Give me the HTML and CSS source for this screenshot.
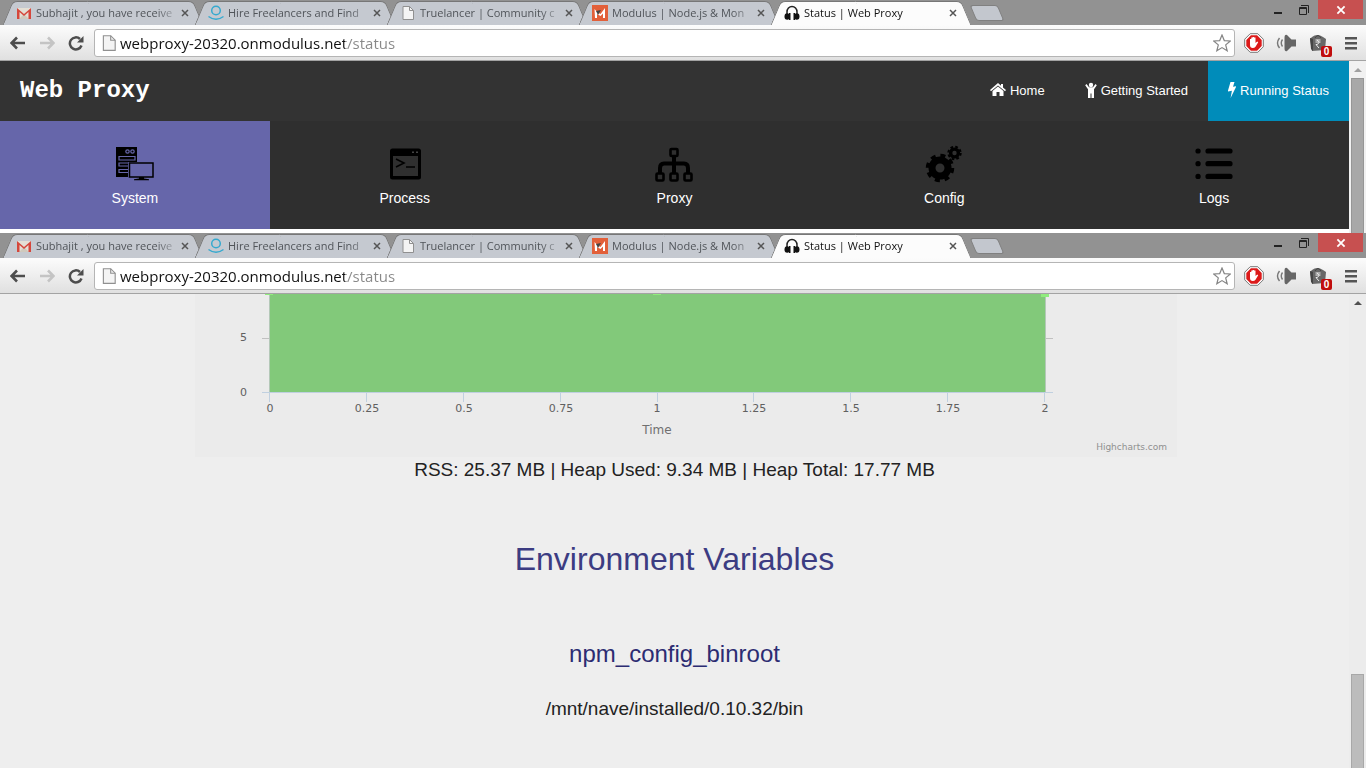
FILE: index.html
```html
<!DOCTYPE html>
<html lang="en">
<head>
<meta charset="utf-8">
<title>Status | Web Proxy</title>
<link rel="stylesheet" href="styles.css">
</head>
<body>
<svg class="sprite" aria-hidden="true">
  <symbol id="gmail" viewBox="0 0 16 16"><path d="M1 3h14v11H1z" fill="#e4dfd5"/><path d="M3 14l5-5 5 5z" fill="#cfc9bd"/><path d="M1 14V3l7 6 7-6v11h-2.500V7L8 11 3.500 7v7z" fill="#d5473c"/></symbol>
  <symbol id="lancer" viewBox="0 0 16 16"><g fill="none" stroke="#35a9cf" stroke-width="1.500"><circle cx="8" cy="5.500" r="4.300"/><path d="M.5 11.500q7.500 5.500 15 0"/></g></symbol>
  <symbol id="file" viewBox="0 0 16 16"><path d="M3 1.500h6.500l4 4v9H3z" fill="#f4f4f4" stroke="#909090"/><path d="M9.500 1.500v4h4" fill="none" stroke="#909090"/></symbol>
  <symbol id="modulus" viewBox="0 0 16 16"><path d="M0 0h16v16H0z" fill="#e2603a"/><path d="M2.500 4l3 3.500L8.500 9 13 3v10h-2V8.500L8.500 11 5 9v4H3z" fill="#fff"/><path d="M4 6l5-1-3 5z" fill="#444"/></symbol>
  <symbol id="headphones" viewBox="0 0 16 16"><path d="M3 11V7a5 5.500 0 0 1 10 0v4" fill="none" stroke="#222" stroke-width="1.500"/><ellipse cx="3.200" cy="11.500" rx="2.700" ry="3.300" fill="#111"/><ellipse cx="12.800" cy="11.500" rx="2.700" ry="3.300" fill="#111"/><path d="M5 8h1.500v7H5zM9.500 8H11v7H9.500z" fill="#111"/></symbol>
  <symbol id="cross" viewBox="0 0 10 10"><path d="M2 2l6 6M8 2L2 8" fill="none" stroke="currentColor" stroke-width="1.500"/></symbol>
  <symbol id="back" viewBox="0 0 16 16"><path d="M15 8H2M7 2.500L1.500 8 7 13.500" fill="none" stroke="currentColor" stroke-width="2.600"/></symbol>
  <symbol id="forward" viewBox="0 0 16 16"><path d="M1 8h13M9 2.500L14.500 8 9 13.500" fill="none" stroke="currentColor" stroke-width="2.600"/></symbol>
  <symbol id="reload" viewBox="0 0 16 16"><path d="M13.500 10.500A6 6 0 1 1 12 4" fill="none" stroke="currentColor" stroke-width="2.500"/><path d="M15.500 1v6.500H9z" fill="currentColor"/></symbol>
  <symbol id="star" viewBox="0 0 18 18"><path d="M9 1l2.300 5.600 6 .4-4.600 3.900 1.500 5.900L9 13.600l-5.200 3.200 1.500-5.900L.7 7l6-.4z" fill="#fff" stroke="#858585" stroke-width="1.200"/></symbol>
  <symbol id="adblock" viewBox="0 0 20 20"><path d="M6.200.7h7.600l5.500 5.500v7.600l-5.500 5.500H6.200L.7 13.800V6.200z" fill="#fff" stroke="#777"/><path d="M6.900 2.300h6.200l4.600 4.600v6.200l-4.600 4.600H6.900l-4.600-4.600V6.900z" fill="#dc1a1a"/><path d="M6 10V6h1.300v3V4.500h1.400V9 4h1.400v5-4.500h1.400V10l1.700-1.500 1 .8-2.700 4.400q-1 1.300-2.700 1.300Q6 15 6 12z" fill="#fff"/></symbol>
  <symbol id="speaker" viewBox="0 0 20 20"><path d="M8.500 5q0-4 2.500-3l4.500 4.500H20v7h-4.500L11 18q-2.500 1-2.500-3z" fill="#666"/><path d="M3.500 5Q-.5 10 3.500 15M6.500 6.500Q4 10 6.500 13.500" fill="none" stroke="#777" stroke-width="1.400"/></symbol>
  <symbol id="bag" viewBox="0 0 18 20"><path d="M3 4q5-4 11 0l3 2-1 11-13 1L1 6z" fill="#686868"/><path d="M1 5l3 1v12l-2-2z" fill="#444"/><path d="M6 5q3-5 6 0" fill="none" stroke="#444"/><path d="M6.500 7h5M6.500 9h5M8 7q4 2.500 0 4.500H7L10 15" fill="none" stroke="#eee"/></symbol>
  <symbol id="menu" viewBox="0 0 14 14"><path d="M1 1h12v2.500H1zM1 6h12v2.500H1zM1 11h12v2.500H1z" fill="#555"/></symbol>
</svg>

<section class="window">
  <div class="chrome">
    <div class="strip">
      <div class="tabs">
        <div class="tab"><svg class="i16"><use href="#gmail"/></svg><a class="title" href="#">Subhajit , you have receive</a><button class="x" aria-label="Close tab"><svg class="i10"><use href="#cross"/></svg></button></div>
        <div class="tab"><svg class="i16"><use href="#lancer"/></svg><a class="title" href="#">Hire Freelancers and Find</a><button class="x" aria-label="Close tab"><svg class="i10"><use href="#cross"/></svg></button></div>
        <div class="tab"><svg class="i16"><use href="#file"/></svg><a class="title" href="#">Truelancer | Community c</a><button class="x" aria-label="Close tab"><svg class="i10"><use href="#cross"/></svg></button></div>
        <div class="tab"><svg class="i16"><use href="#modulus"/></svg><a class="title" href="#">Modulus | Node.js &amp; Mon</a><button class="x" aria-label="Close tab"><svg class="i10"><use href="#cross"/></svg></button></div>
        <div class="tab active"><svg class="i16"><use href="#headphones"/></svg><a class="title" href="#">Status | Web Proxy</a><button class="x" aria-label="Close tab"><svg class="i10"><use href="#cross"/></svg></button></div>
        <button class="newtab" aria-label="New tab"></button>
      </div>
      <div class="controls">
        <button aria-label="Minimize"><svg class="i12" viewBox="0 0 12 12"><path d="M2 8h8v2H2z" fill="#222"/></svg></button>
        <button aria-label="Restore"><svg class="i12" viewBox="0 0 12 12"><path d="M1.500 3.500h7v7h-7zM1 4.500h8M3 1.500h7.500V9" fill="none" stroke="#222"/></svg></button>
        <button class="close" aria-label="Close"><svg class="i12"><use href="#cross"/></svg></button>
      </div>
    </div>
    <div class="toolbar">
      <div class="history">
        <button aria-label="Back"><svg class="i16"><use href="#back"/></svg></button>
        <button class="off" aria-label="Forward"><svg class="i16"><use href="#forward"/></svg></button>
        <button aria-label="Reload"><svg class="i16"><use href="#reload"/></svg></button>
      </div>
      <div class="omnibox"><svg class="page-icon"><use href="#file"/></svg><input type="text" aria-label="Address" value="webproxy-20320.onmodulus.net/status"><button aria-label="Bookmark"><svg class="i18"><use href="#star"/></svg></button></div>
      <div class="extensions">
        <button aria-label="AdBlock"><svg class="i20"><use href="#adblock"/></svg></button>
        <button aria-label="Sound"><svg class="i20"><use href="#speaker"/></svg></button>
        <button class="shop" aria-label="Deals"><svg class="i20"><use href="#bag"/></svg><span class="badge">0</span></button>
        <button class="menu" aria-label="Menu"><svg class="i14"><use href="#menu"/></svg></button>
      </div>
    </div>
  </div>
  <div class="viewport">
    <div class="page top-page">
      <header class="site">
        <a class="brand" href="#">Web Proxy</a>
        <nav class="mainnav">
          <a href="#"><svg width="16" height="16" viewBox="0 0 16 16" fill="#fff"><path d="M8 1l3 2.700V2h2v3.500L16 8l-1 1.200L8 3.400 1 9.200 0 8z"/><path d="M8 4.500l5.500 4.600V14H9.500v-4h-3v4h-4V9.100z"/></svg>Home</a>
          <a href="#"><svg width="12" height="16" viewBox="0 0 12 16" fill="#fff"><circle cx="6" cy="3" r="2.200"/><path d="M1.500 2l2.500 3.300h4L10.500 2l1.300 1.200L9 7.200V16H6.500v-4.500h-1V16H3V7.200L.2 3.200z"/></svg>Getting Started</a>
          <a class="current" href="#"><svg width="8" height="16" viewBox="0 0 8 16" fill="#fff"><path d="M2.500 0h4L5 4.800l3.500-.7L2.600 16l1.300-7.300L-.3 9.500z"/></svg>Running Status</a>
        </nav>
      </header>
      <nav class="subnav">
        <a class="current" href="#"><svg class="i38" viewBox="0 0 38 38"><path d="M0 2h21v15h-9v15H0z"/><g fill="none" stroke="#6666aa" stroke-width="1.200"><circle cx="11.500" cy="6.500" r="1.700"/><circle cx="16.500" cy="6.500" r="1.700"/><path d="M3 11.500h16v3.500H3zM12 18H3v3h9M12 24.500H3v3h9"/></g><path d="M13.500 18h23.500v14H13.500z" fill="#6666aa" stroke="#000" stroke-width="1.500"/><path d="M23 32h5v1.500l5 .8v1H18v-1l5-.8z"/></svg><span>System</span></a>
        <a href="#"><svg class="i38" viewBox="0 0 38 38"><rect x="4" y="3.500" width="31" height="31" rx="2.500"/><path d="M7 11h25v20H7z" fill="#2f2f2f"/><path d="M10 14l8 4-8 4M20 22h9" fill="none" stroke="#000" stroke-width="1.600"/><path d="M26 6.500h2v1.500h-2zM30 6.500h2v1.500h-2z" fill="#444"/></svg><span>Process</span></a>
        <a href="#"><svg class="i38" viewBox="0 0 38 38" fill="none" stroke="#000"><path d="M19 11v17M5 28v-5q0-4.500 4-4.500h20q4 0 4 4.500v5" stroke-width="4"/><g fill="#2f2f2f" stroke-width="2.600"><rect x="15.500" y="4" width="7" height="7" rx="1"/><rect x="1.500" y="28.500" width="7" height="7" rx="1"/><rect x="15.500" y="28.500" width="7" height="7" rx="1"/><rect x="29.500" y="28.500" width="7" height="7" rx="1"/></g></svg><span>Proxy</span></a>
        <a href="#"><svg class="i38" viewBox="0 0 38 38" fill="none" stroke="#000"><circle cx="15" cy="23" r="8" stroke-width="7"/><circle cx="15" cy="23" r="12.500" stroke-width="3.500" stroke-dasharray="5 4.820"/><circle cx="29.500" cy="8" r="3.900" stroke-width="3.400"/><circle cx="29.500" cy="8" r="6.200" stroke-width="2" stroke-dasharray="2.700 2.170"/></svg><span>Config</span></a>
        <a href="#"><svg class="i38" viewBox="0 0 38 38" stroke="#000" stroke-width="5.200" stroke-linecap="round"><path d="M13 6h22M13 18.700h22M13 31.400h22M3 6h.1M3 18.700h.1M3 31.400h.1"/></svg><span>Logs</span></a>
      </nav>
    </div>
    <div class="scrollbar dim"><i class="arrow"></i><i class="thumb"></i></div>
  </div>
</section>

<section class="window grow">
  <div class="chrome">
    <div class="strip">
      <div class="tabs">
        <div class="tab"><svg class="i16"><use href="#gmail"/></svg><a class="title" href="#">Subhajit , you have receive</a><button class="x" aria-label="Close tab"><svg class="i10"><use href="#cross"/></svg></button></div>
        <div class="tab"><svg class="i16"><use href="#lancer"/></svg><a class="title" href="#">Hire Freelancers and Find</a><button class="x" aria-label="Close tab"><svg class="i10"><use href="#cross"/></svg></button></div>
        <div class="tab"><svg class="i16"><use href="#file"/></svg><a class="title" href="#">Truelancer | Community c</a><button class="x" aria-label="Close tab"><svg class="i10"><use href="#cross"/></svg></button></div>
        <div class="tab"><svg class="i16"><use href="#modulus"/></svg><a class="title" href="#">Modulus | Node.js &amp; Mon</a><button class="x" aria-label="Close tab"><svg class="i10"><use href="#cross"/></svg></button></div>
        <div class="tab active"><svg class="i16"><use href="#headphones"/></svg><a class="title" href="#">Status | Web Proxy</a><button class="x" aria-label="Close tab"><svg class="i10"><use href="#cross"/></svg></button></div>
        <button class="newtab" aria-label="New tab"></button>
      </div>
      <div class="controls">
        <button aria-label="Minimize"><svg class="i12" viewBox="0 0 12 12"><path d="M2 8h8v2H2z" fill="#222"/></svg></button>
        <button aria-label="Restore"><svg class="i12" viewBox="0 0 12 12"><path d="M1.500 3.500h7v7h-7zM1 4.500h8M3 1.500h7.500V9" fill="none" stroke="#222"/></svg></button>
        <button class="close" aria-label="Close"><svg class="i12"><use href="#cross"/></svg></button>
      </div>
    </div>
    <div class="toolbar">
      <div class="history">
        <button aria-label="Back"><svg class="i16"><use href="#back"/></svg></button>
        <button class="off" aria-label="Forward"><svg class="i16"><use href="#forward"/></svg></button>
        <button aria-label="Reload"><svg class="i16"><use href="#reload"/></svg></button>
      </div>
      <div class="omnibox"><svg class="page-icon"><use href="#file"/></svg><input type="text" aria-label="Address" value="webproxy-20320.onmodulus.net/status"><button aria-label="Bookmark"><svg class="i18"><use href="#star"/></svg></button></div>
      <div class="extensions">
        <button aria-label="AdBlock"><svg class="i20"><use href="#adblock"/></svg></button>
        <button aria-label="Sound"><svg class="i20"><use href="#speaker"/></svg></button>
        <button class="shop" aria-label="Deals"><svg class="i20"><use href="#bag"/></svg><span class="badge">0</span></button>
        <button class="menu" aria-label="Menu"><svg class="i14"><use href="#menu"/></svg></button>
      </div>
    </div>
  </div>
  <div class="viewport">
    <main class="page status">
      <figure class="chart">
        <svg viewBox="0 0 982 163" role="img" aria-label="Memory over time">
          <rect width="982" height="163" fill="#ebebeb"/>
          <path d="M75 0h775v98H75z" fill="#82c97a"/>
          <path d="M67 44.500h8M850 44.500h8" stroke="#c0c0c0"/>
          <path d="M74.500 0v98M850.500 0v98" stroke="#b4c8b8"/>
          <path d="M67 98.500h791M74.500 99v9M171.500 99v9M268.500 99v9M365.500 99v9M462.500 99v9M558.500 99v9M655.500 99v9M752.500 99v9M849.500 99v9" stroke="#c0d0e0"/>
          <path d="M70 0h8v1h-8zM458 0h8v1h-8zM846 0h8v3h-8z" fill="#90ed7d"/>
          <g class="ticks">
            <text x="52" y="47" text-anchor="end">5</text><text x="52" y="102" text-anchor="end">0</text>
            <g text-anchor="middle"><text x="75" y="118">0</text><text x="172" y="118">0.25</text><text x="269" y="118">0.5</text><text x="366" y="118">0.75</text><text x="462" y="118">1</text><text x="559" y="118">1.25</text><text x="656" y="118">1.5</text><text x="753" y="118">1.75</text><text x="850" y="118">2</text></g>
          </g>
          <text class="axis" x="462" y="140" text-anchor="middle">Time</text>
          <text class="credit" x="972" y="156" text-anchor="end">Highcharts.com</text>
        </svg>
      </figure>
      <p class="reading">RSS: 25.37 MB | Heap Used: 9.34 MB | Heap Total: 17.77 MB</p>
      <h1>Environment Variables</h1>
      <h2>npm_config_binroot</h2>
      <p class="reading">/mnt/nave/installed/0.10.32/bin</p>
    </main>
    <div class="scrollbar low"><i class="arrow"></i><i class="thumb"></i></div>
  </div>
</section>
</body>
</html>
```

FILE: styles.css
```css
* { box-sizing: border-box; }
body { margin: 0; min-height: 100vh; display: flex; flex-direction: column; font-family: "Liberation Sans", Arial, sans-serif; background: #fff; }
button { border: 0; padding: 0; background: none; color: inherit; display: flex; align-items: center; justify-content: center; }
a { color: inherit; text-decoration: none; }
svg { display: block; flex: none; }
.sprite { position: absolute; width: 0; height: 0; }
.i10 { width: 10px; height: 10px; }
.i12 { width: 12px; height: 12px; }
.i14 { width: 14px; height: 14px; }
.i16 { width: 16px; height: 16px; }
.i18 { width: 18px; height: 18px; }
.i20 { width: 20px; height: 20px; }
.i38 { width: 38px; height: 38px; }

.window { display: flex; flex-direction: column; }
.grow { flex: 1; }

/* Browser frame */
.strip { height: 25px; display: flex; justify-content: space-between; align-items: flex-start; background: #929292; overflow: hidden; }
.tabs { display: flex; align-items: flex-start; padding: 1px 0 0 2px; }
.tab { position: relative; z-index: 0; display: flex; align-items: center; width: 202px; height: 24px; margin-right: -10px; padding: 0 13px 0 14px; color: #505459; font: 11px "Open Sans", "Noto Sans", sans-serif; }
.tab::before, .tab::after { content: ""; position: absolute; z-index: -1; top: 0; height: 25px; background: #c5c9d0; border: 1px solid #777; }
.tab::before { left: 5px; right: 50%; border-right: 0; border-radius: 5px 0 0 0; transform: skewX(-23deg); }
.tab::after { left: 45%; right: 5px; border-left: 0; border-radius: 0 5px 0 0; transform: skewX(23deg); }
.tab.active { z-index: 1; color: #111; }
.tab.active::before, .tab.active::after { background: #fcfcfc; border-bottom-color: #fcfcfc; }
.title { width: 142px; margin: 0 2px 0 4px; white-space: nowrap; line-height: 18px; mask-image: linear-gradient(90deg, #000 120px, transparent 145px); }
.x { width: 10px; height: 16px; color: #555; }
.newtab { width: 28px; height: 16px; margin: 4px 0 0 11px; background: #c3c7ce; border: 1px solid #808080; border-radius: 3px; transform: skewX(23deg); }
.controls { display: flex; padding-right: 3px; }
.controls button { width: 26px; height: 19px; }
.controls .close { width: 45px; margin-left: 1px; background: #c75050; color: #fff; }

.toolbar { height: 36px; display: flex; align-items: center; padding: 0 8px 0 10px; background: linear-gradient(#fcfcfc, #e0e0e0); border-bottom: 1px solid #a3a3a3; }
.history { display: flex; gap: 13px; width: 84px; color: #4d4d4d; }
.history .off { color: #c4c4c4; }
.omnibox { flex: 1; height: 28px; display: flex; align-items: center; padding: 0 3px 0 5px; background: #fff; border: 1px solid #b5b5b5; border-radius: 3px; }
.page-icon { width: 18px; height: 18px; }
.omnibox input { flex: 1; min-width: 0; height: 24px; margin: 0 0 0 2px; padding: 0; border: 0; outline: 0; font: 15px "Open Sans", "Noto Sans", sans-serif; color: transparent; background: linear-gradient(90deg, #111 225px, #888 225px); -webkit-background-clip: text; background-clip: text; }
.extensions { display: flex; align-items: center; gap: 12px; padding-left: 9px; }
.shop { position: relative; }
.menu { margin-left: 4px; }
.badge { position: absolute; right: -4px; bottom: -4px; width: 11px; height: 11px; background: #c00d0d; border-radius: 2px; color: #fff; font: bold 10px/11px "Liberation Sans", Arial, sans-serif; text-align: center; }

.viewport { display: flex; flex: 1; }
.page { flex: 1; min-width: 0; }
.scrollbar { width: 17px; padding: 0 2px; background: #f1f1f1; display: flex; flex-direction: column; align-items: center; }
.arrow { margin: 7px 0 6px; border: 4px solid transparent; border-top: 0; border-bottom: 4px solid #a0a0a0; }
.thumb { flex: 1; align-self: stretch; background: #a8a8a8; border: 1px solid #969696; border-bottom: 0; }
.low .arrow { border-bottom-color: #505050; }
.low { background: #ececec; }
.low .thumb { flex: none; height: 94px; margin-top: auto; background: #bcbcbc; border-color: #a8a8a8; }

/* Site header */
.top-page { padding-bottom: 4px; color: #fff; }
.site { height: 60px; display: flex; justify-content: space-between; background: #333; }
.brand { padding-left: 20px; font: bold 24px/60px "Liberation Mono", "Courier New", monospace; }
.mainnav { display: flex; font-size: 13px; }
.mainnav a { display: flex; align-items: center; gap: 4px; padding: 0 20px 2px; }
.mainnav .current { background: #008cba; }
.subnav { display: flex; background: #2f2f2f; font-size: 14px; }
.subnav a { flex: 1; height: 108px; display: flex; flex-direction: column; align-items: center; gap: 5px; padding-top: 24px; line-height: 20px; }
.subnav .current { background: #6666aa; }

/* Status page */
.status { background: #eee; color: #222; text-align: center; }
.chart { margin: 0 172px 0 195px; }
.chart svg { width: 100%; }
.ticks { font: 11px "DejaVu Sans", sans-serif; fill: #606060; }
.axis { font: 12px "DejaVu Sans", sans-serif; fill: #707070; }
.credit { font: 9px "DejaVu Sans", sans-serif; fill: #909090; }
.reading { margin: 0; font-size: 19px; line-height: 26px; }
h1 { margin: 56px 0 60px; font-size: 32px; line-height: 40px; font-weight: 400; color: #3c3c82; }
h2 { margin: 0 0 27px; font-size: 24px; line-height: 30px; font-weight: 400; color: #2c2c72; }
```
